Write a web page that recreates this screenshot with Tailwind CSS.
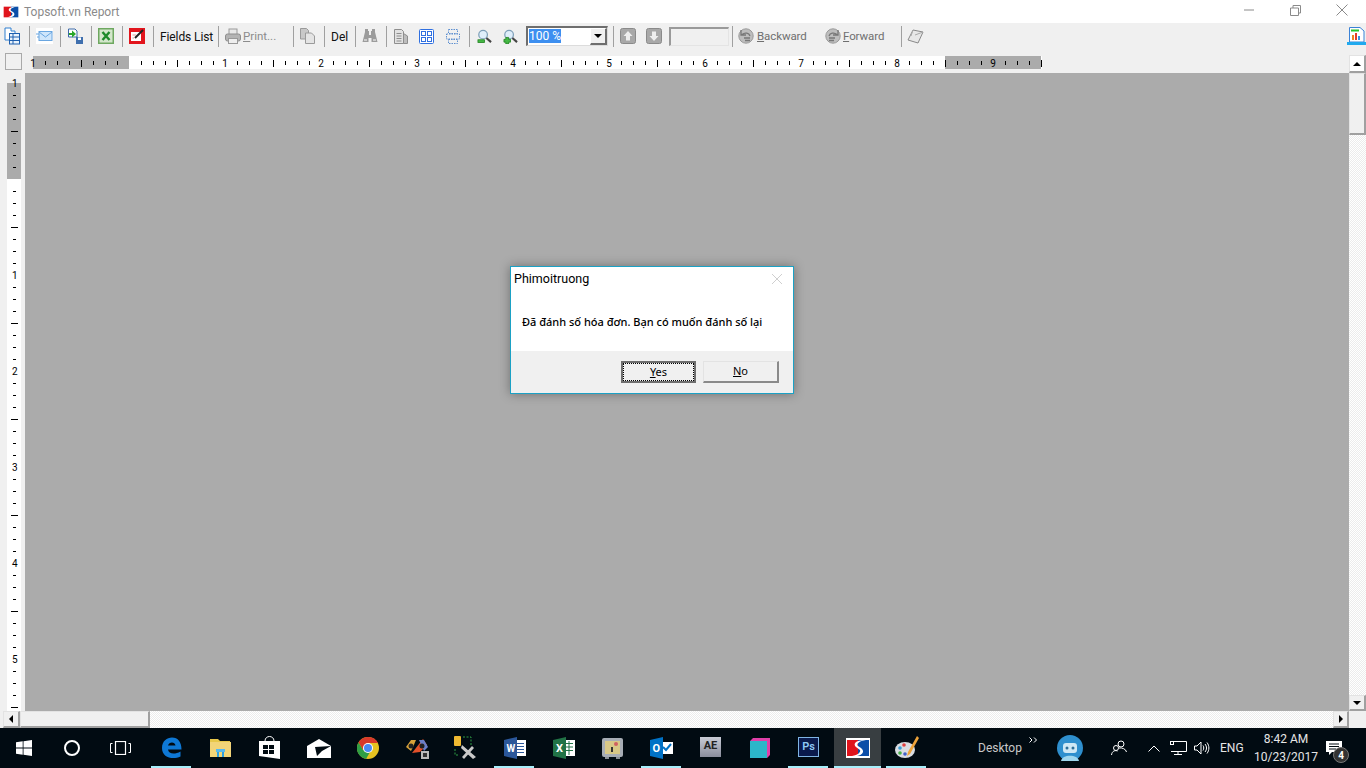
<!DOCTYPE html>
<html lang="en">
  <head>
    <meta charset="UTF-8" />
    <title>Topsoft.vn Report</title>
    <script src="https://cdn.jsdelivr.net/npm/@tailwindcss/browser@4"></script>
  </head>
  <body class="bg-[#f0f0f0] font-['Roboto','Liberation_Sans',sans-serif]">
    <svg width="0" height="0" class="absolute">
      <symbol id="logo" viewBox="0 0 24 20">
        <rect width="24" height="20" fill="#fff" />
        <rect x="1" y="2" width="11" height="16" fill="#e0141c" />
        <rect x="12" y="2" width="11" height="16" fill="#0b4ea8" />
        <path d="M17 2 C9 3 7 6 10 9 L14 12 C15 14 12 17 6 18 L11 18 C17 17 19 13 15 10 L12 8 C10 6 13 3 20 2 Z" fill="#fff" />
      </symbol>
      <symbol id="glass" viewBox="0 0 16 16">
        <circle cx="6.5" cy="6" r="4.6" fill="#dfeefa" stroke="#7d9fb8" stroke-width="1.3" />
        <path d="M10 9.5 L15 14" stroke="#444" stroke-width="2.2" />
      </symbol>
    </svg>

    <div class="relative flex h-[768px] w-[1366px] flex-col overflow-hidden">
      <!-- title bar -->
      <div class="flex h-[23px] items-center bg-white pl-[3px] text-[12px] text-[#8a8a8a]">
        <svg class="h-[14px] w-[16px]"><use href="#logo" /></svg>
        <span class="ml-[5px] mt-px w-[94px] whitespace-nowrap">Topsoft.vn Report</span>
        <svg class="ml-auto mr-[35px] mb-[3px] h-[2px] w-[11px]" viewBox="0 0 11 2"><path d="M0 1H10" stroke="#8a8a8a" /></svg>
        <svg class="mr-[35px] mb-[3px] h-[11px] w-[11px]" viewBox="0 0 11 11" fill="none" stroke="#8a8a8a"><path d="M.5 3H8.500V10.500H.5ZM3 3V.5H10.500V8H8.500" /></svg>
        <svg class="mr-[18px] mb-[3px] h-[12px] w-[12px]" viewBox="0 0 12 12" stroke="#8a8a8a"><path d="M.5 .5L11.500 11.500M11.500 .5L.5 11.500" /></svg>
      </div>

      <!-- toolbar -->
      <div class="flex h-[29px] items-center bg-[#f0f0f0] pb-[3px] pl-[4px] text-[12px] text-[#111]">
        <svg class="h-[18px] w-[16px]" viewBox="0 0 16 18"><path d="M1 1H7V4H11V8H7V13H1Z" fill="#fff" stroke="#2f7fd0" /><rect x="5.500" y="6.500" width="10" height="10.500" fill="#e9f3fc" stroke="#1e5fae" /><path d="M5.500 10H15.500M5.500 13.500H15.500M9 6.500V17" stroke="#1e5fae" /></svg>
        <div class="ml-[9px] h-[21px] w-px bg-[#a0a0a0]"></div>
        <svg class="ml-[6px] h-[16px] w-[17px]" viewBox="0 0 17 16"><rect width="17" height="16" fill="#fff" /><rect x="3" y="3.500" width="13" height="9" fill="#cfe6fb" stroke="#6aa6e0" /><path d="M3 4L9.500 9L16 4M0 6H3M1 9H3" fill="none" stroke="#6aa6e0" /></svg>
        <div class="ml-[7px] h-[21px] w-px bg-[#a0a0a0]"></div>
        <svg class="ml-[6px] h-[16px] w-[16px]" viewBox="0 0 16 16"><path d="M1.500 1H8L10 3V9H1.500Z" fill="#fff" stroke="#3d6aa8" /><path d="M2 5H5V2.500L9 6L5 9.500V7H2Z" fill="#29a829" /><rect x="9" y="9" width="7" height="7" fill="#3f6fae" /><rect x="11" y="9.500" width="3" height="2.500" fill="#fff" /></svg>
        <div class="ml-[8px] h-[21px] w-px bg-[#a0a0a0]"></div>
        <svg class="ml-[6px] h-[16px] w-[16px]" viewBox="0 0 16 16"><rect width="16" height="16" fill="#6ea860" /><rect x="1.500" y="1.500" width="13" height="13" fill="#d3e6cb" /><path d="M4.500 4L11.500 12M11.500 4L4.500 12" stroke="#1d8a2a" stroke-width="2.400" /></svg>
        <div class="ml-[8px] h-[21px] w-px bg-[#a0a0a0]"></div>
        <svg class="ml-[6px] h-[16px] w-[16px]" viewBox="0 0 16 16"><rect width="16" height="16" fill="#e2151d" /><rect x="2" y="4" width="10" height="9" fill="#fff" /><path d="M6 10L14 2" stroke="#222" stroke-width="2" /><path d="M3.500 7H7M3.500 10H5" stroke="#e79a9a" /></svg>
        <div class="ml-[8px] h-[21px] w-px bg-[#a0a0a0]"></div>
        <span class="ml-[6px] mt-[2px] w-[52px] whitespace-nowrap tracking-[-0.1px]">Fields List</span>
        <div class="ml-[6px] h-[21px] w-px bg-[#a0a0a0]"></div>
        <svg class="ml-[6px] h-[16px] w-[16px]" viewBox="0 0 16 16"><rect x="4" y="1" width="8" height="6" fill="#e8e8e8" stroke="#9a9a9a" /><rect x=".5" y="6" width="15" height="7" rx="2" fill="#b4b4b4" stroke="#8e8e8e" /><rect x="3.500" y="10.500" width="9" height="5" fill="#eee" stroke="#999" /></svg>
        <span class="ml-[2px] mt-[2px] w-[32px] whitespace-nowrap text-[11.500px] text-[#8c8c8c]"><span class="underline">P</span>rint...</span>
        <div class="ml-[18px] h-[21px] w-px bg-[#a0a0a0]"></div>
        <svg class="ml-[6px] h-[16px] w-[15px]" viewBox="0 0 15 16"><path d="M.5 .5H6.500L8.500 2.500V11H.5Z" fill="#c8c8c8" stroke="#9a9a9a" /><path d="M5.500 5H11.500L14.500 8V15.500H5.500Z" fill="#e4e4e4" stroke="#9a9a9a" /></svg>
        <div class="ml-[9px] h-[21px] w-px bg-[#a0a0a0]"></div>
        <span class="ml-[6px] mt-[2px] w-[16px] whitespace-nowrap">Del</span>
        <div class="ml-[8px] h-[21px] w-px bg-[#a0a0a0]"></div>
        <svg class="ml-[6px] h-[16px] w-[16px]" viewBox="0 0 16 16" fill="#9c9c9c"><path d="M3 1H6V3H7V7H9V3H10V1H13V4L15.500 14H9.500V10H6.500V14H.5L3 4Z" /><rect x="2" y="11" width="3" height="2" fill="#ccc" /><rect x="11" y="11" width="3" height="2" fill="#ccc" /></svg>
        <div class="ml-[8px] h-[21px] w-px bg-[#a0a0a0]"></div>
        <svg class="ml-[7px] h-[15px] w-[14px]" viewBox="0 0 14 15"><path d="M.5 .5H7.500L9.500 2.500V14.500H.5Z" fill="#e2e2e2" stroke="#8e8e8e" /><path d="M2.500 4.500H7.500M2.500 7H7.500M2.500 9.500H7.500M2.500 12H7.500" stroke="#8e8e8e" /><path d="M9.500 4.500L13.500 7V14.500H9.500Z" fill="#bdbdbd" stroke="#8e8e8e" /></svg>
        <svg class="ml-[11px] h-[15px] w-[15px]" viewBox="0 0 15 15" fill="#fff" stroke="#2f6fe0"><rect x=".5" y=".5" width="14" height="14" rx="1" /><rect x="2.500" y="2.500" width="4" height="4" /><rect x="8.500" y="2.500" width="4" height="4" /><rect x="2.500" y="8.500" width="4" height="4" /><rect x="8.500" y="8.500" width="4" height="4" /></svg>
        <svg class="ml-[12px] h-[15px] w-[14px]" viewBox="0 0 14 15" fill="none" stroke="#5d8fd0" stroke-dasharray="1.500 1"><rect x="2.500" y=".5" width="9" height="4" /><rect x=".5" y="5" width="13" height="5" /><rect x="2.500" y="10.500" width="9" height="4" /></svg>
        <div class="ml-[9px] h-[21px] w-px bg-[#a0a0a0]"></div>
        <svg class="ml-[7px] h-[15px] w-[15px]" viewBox="0 0 16 16"><use href="#glass" /><rect x="1" y="11.500" width="7" height="3" fill="#45b845" stroke="#1c7d1c" stroke-width=".8" /></svg>
        <svg class="ml-[11px] h-[15px] w-[15px]" viewBox="0 0 16 16"><use href="#glass" /><path d="M3 9H6V11H8V14H6V16H3V14H1V11H3Z" fill="#45b845" stroke="#1c7d1c" stroke-width=".8" /></svg>
        <div class="ml-[8px] flex h-[20px] w-[82px] border border-t-2 border-l-2 border-t-[#6e6e6e] border-l-[#6e6e6e] border-r-[#dcdcdc] border-b-[#dcdcdc] bg-white">
          <span class="ml-[1px] mt-[1px] h-[14px] self-start bg-[#3d8ff0] text-[12px] leading-[14px] text-white">100 %</span>
          <div class="ml-auto flex w-[17px] items-center justify-center border border-r-2 border-b-2 border-t-white border-l-white border-r-[#6e6e6e] border-b-[#6e6e6e] bg-[#f0f0f0]">
            <div class="h-0 w-0 border-x-[4px] border-t-[4px] border-x-transparent border-t-black"></div>
          </div>
        </div>
        <div class="ml-[5px] h-[21px] w-px bg-[#a0a0a0]"></div>
        <svg class="ml-[6px] h-[16px] w-[16px]" viewBox="0 0 16 16"><rect x=".5" y=".5" width="15" height="15" rx="2" fill="#a8a8a8" stroke="#8a8a8a" /><path d="M8 3L12.500 8H10V12.500H6V8H3.500Z" fill="#eee" /></svg>
        <svg class="ml-[10px] h-[16px] w-[16px]" viewBox="0 0 16 16"><rect x=".5" y=".5" width="15" height="15" rx="2" fill="#a8a8a8" stroke="#8a8a8a" /><path d="M8 13L12.500 8H10V3.500H6V8H3.500Z" fill="#eee" /></svg>
        <div class="ml-[7px] h-[19px] w-[60px] border border-t-2 border-l-2 border-t-[#9a9a9a] border-l-[#9a9a9a] border-r-[#e4e4e4] border-b-[#e4e4e4] bg-[#f0f0f0]"></div>
        <div class="ml-[3px] h-[21px] w-px bg-[#a0a0a0]"></div>
        <svg class="ml-[5px] h-[16px] w-[16px]" viewBox="0 0 16 16"><circle cx="8" cy="8" r="7.200" fill="#bdbdbd" stroke="#9a9a9a" /><path d="M3 2V7H8M4 6.500C7 4 11 5 12 8M6 10H12M7 12.500H12" fill="none" stroke="#777" stroke-width="1.300" /></svg>
        <span class="ml-[3px] mt-[2px] w-[49px] whitespace-nowrap text-[11.500px] tracking-[-0.1px] text-[#6f6f6f]"><span class="underline">B</span>ackward</span>
        <svg class="ml-[19px] h-[16px] w-[16px]" viewBox="0 0 16 16"><circle cx="8" cy="8" r="7.200" fill="#bdbdbd" stroke="#9a9a9a" /><path d="M13 2V7H8M12 6.500C9 4 5 5 4 8M4 10H10M4 12.500H9" fill="none" stroke="#777" stroke-width="1.300" /></svg>
        <span class="ml-[2px] mt-[2px] w-[41px] whitespace-nowrap text-[11.500px] tracking-[-0.1px] text-[#6f6f6f]"><span class="underline">F</span>orward</span>
        <div class="ml-[17px] h-[21px] w-px bg-[#a0a0a0]"></div>
        <svg class="ml-[5px] h-[15px] w-[17px]" viewBox="0 0 17 15"><path d="M6 1L16 3L11 14L1 11Z" fill="#e8e8e8" stroke="#8a8a8a" /><path d="M6 1L4 7M16 3L8 6" stroke="#aaa" fill="none" /></svg>
        <svg class="ml-auto h-[19px] w-[19px]" viewBox="0 0 19 19"><path d="M2.500 .5H13L17 4V15H2.500Z" fill="#fff" stroke="#3b82d6" /><rect x="4" y="2.500" width="8" height="2" fill="#22c32a" /><rect x="5" y="8" width="2" height="5" fill="#f08020" /><rect x="8" y="6" width="2" height="7" fill="#e23b2a" /><rect x="11" y="9" width="2" height="4" fill="#3a8fe0" /><rect y="15" width="19" height="3" fill="#21a9ee" /></svg>
      </div>

      <!-- report area -->
      <div class="flex h-[659px]">
        <div class="flex w-[1349px] flex-col">
          <div class="flex h-[21px] bg-[#f0f0f0]">
            <div class="ml-[5px] mt-px h-[17px] w-[17px] border border-[#a9a9a9] bg-[#f0f0f0]"></div>
            <div id="h-ruler" class="relative ml-[11px] mt-[4px] h-[13px] w-[1009px] bg-white">
              <div class="absolute inset-y-0 left-0 w-[96px] bg-[#ababab]"></div>
              <div class="absolute inset-y-0 left-[912px] w-[96px] bg-[#ababab]"></div>
            </div>
          </div>
          <div class="flex flex-1">
            <div class="w-[25px] pl-[7px] pt-[10px]">
              <div id="v-ruler" class="relative h-[628px] w-[14px] bg-white">
                <div class="absolute inset-x-0 top-0 h-[96px] bg-[#ababab]"></div>
              </div>
            </div>
            <div class="flex-1 bg-[#ababab]"></div>
          </div>
        </div>
        <!-- vertical scrollbar -->
        <div class="flex w-[17px] flex-col pt-[3px]">
          <div class="flex h-[18px] items-center justify-center border border-r-2 border-b-2 border-t-[#e3e3e3] border-l-[#e3e3e3] border-r-[#a0a0a0] border-b-[#a0a0a0] bg-white">
            <div class="h-0 w-0 border-x-[4px] border-b-[4px] border-x-transparent border-b-black"></div>
          </div>
          <div class="h-[62px] border border-r-2 border-b-2 border-t-[#e3e3e3] border-l-[#e3e3e3] border-r-[#a0a0a0] border-b-[#a0a0a0] bg-[#f0f0f0]"></div>
          <div class="flex-1 bg-[repeating-conic-gradient(#ececec_0_25%,#fff_0_50%)] bg-[length:2px_2px]"></div>
          <div class="flex h-[16px] items-center justify-center border border-r-2 border-b-2 border-t-[#e3e3e3] border-l-[#e3e3e3] border-r-[#a0a0a0] border-b-[#a0a0a0] bg-[#f0f0f0]">
            <div class="h-0 w-0 border-x-[4px] border-t-[4px] border-x-transparent border-t-black"></div>
          </div>
        </div>
      </div>

      <!-- horizontal scrollbar -->
      <div class="flex h-[17px] bg-[#f0f0f0] pl-[3px]">
        <div class="flex w-[17px] items-center justify-center border border-r-2 border-b-2 border-t-[#e3e3e3] border-l-[#e3e3e3] border-r-[#a0a0a0] border-b-[#a0a0a0] bg-[#f0f0f0]">
          <div class="h-0 w-0 border-y-[4px] border-r-[4px] border-y-transparent border-r-black"></div>
        </div>
        <div class="w-[130px] border border-r-2 border-b-2 border-t-[#e3e3e3] border-l-[#e3e3e3] border-r-[#a0a0a0] border-b-[#a0a0a0] bg-[#f0f0f0]"></div>
        <div class="w-[1183px] bg-[repeating-conic-gradient(#ececec_0_25%,#fff_0_50%)] bg-[length:2px_2px]"></div>
        <div class="flex w-[16px] items-center justify-center border border-r-2 border-b-2 border-t-[#e3e3e3] border-l-[#e3e3e3] border-r-[#a0a0a0] border-b-[#a0a0a0] bg-[#f0f0f0]">
          <div class="h-0 w-0 border-y-[4px] border-l-[4px] border-y-transparent border-l-black"></div>
        </div>
      </div>

      <!-- taskbar -->
      <div class="flex h-[40px] items-stretch bg-[#010b12] text-white">
        <div class="flex w-[48px] items-center justify-center">
          <svg class="h-[16px] w-[16px]" viewBox="0 0 16 16" fill="#fff"><path d="M0 2.300L6.700 1.300V7.600H0ZM7.500 1.200L16 0V7.600H7.500ZM0 8.400H6.700V14.700L0 13.700ZM7.500 8.400H16V16L7.500 14.800Z" /></svg>
        </div>
        <div class="flex w-[48px] items-center justify-center">
          <div class="h-[16px] w-[16px] rounded-full border-2 border-white"></div>
        </div>
        <div class="flex w-[48px] items-center justify-center">
          <svg class="h-[14px] w-[21px]" viewBox="0 0 21 14" fill="none" stroke="#fff"><rect x="5.500" y=".5" width="10" height="13" stroke-width="1.200" /><path d="M2.500 2.500H.5V11.500H2.500M18.500 2.500H20.500V11.500H18.500" /></svg>
        </div>
        <div class="relative ml-[3px] flex w-[49px] items-center justify-center">
          <svg class="h-[22px] w-[21px]" viewBox="0 0 21 22"><path d="M1 11C1 4 6 .5 11 .5C17 .5 20.500 5 20.500 12.500H7C7.500 17 13.500 18 19.500 14.500V19.500C12 23 1 21 1 11ZM7 8.500H14.500C14 4.500 8 4.500 7 8.500Z" fill="#0e78d5" /></svg>
          <div class="absolute bottom-0 left-[4px] h-[2px] w-[40px] bg-[#a6eefa]"></div>
        </div>
        <div class="flex w-[49px] items-center justify-center">
          <svg class="h-[19px] w-[21px]" viewBox="0 0 21 19"><path d="M0 0H8L10 2H20V4H0Z" fill="#e8c84a" /><rect y="3" width="21" height="15" fill="#f2d478" /><path d="M7 18V11H14V18H12V13H9V18Z" fill="#2d9fe0" /><rect x="6" y="10" width="9" height="3" fill="#58b8ec" /></svg>
        </div>
        <div class="flex w-[49px] items-center justify-center">
          <svg class="h-[24px] w-[21px]" viewBox="0 0 21 24"><path d="M0 5H21V23L0 20Z" fill="#fff" /><path d="M6 5C6 -1 15 -1 15 5" fill="none" stroke="#fff" /><path d="M4 9H9V13H4ZM10 9H15V13H10ZM4 14H9V18H4ZM10 14H15V18H10Z" fill="#010b12" /></svg>
        </div>
        <div class="flex w-[49px] items-center justify-center">
          <svg class="h-[19px] w-[24px]" viewBox="0 0 24 19"><path d="M0 7L12 0L24 7V19H0Z" fill="#fff" /><path d="M8 8L24 7L15 12L10 17Z" fill="#010b12" /></svg>
        </div>
        <div class="flex w-[49px] items-center justify-center">
          <svg class="h-[22px] w-[22px]" viewBox="0 0 22 22"><circle cx="11" cy="11" r="11" fill="#e5c220" /><path d="M11 0A11 11 0 0 0 1.500 5.500L6 13L11 6H21A11 11 0 0 0 11 0Z" fill="#d8392b" /><path d="M1.500 5.500A11 11 0 0 0 9 22L13 15L6 13Z" fill="#2f9e44" /><circle cx="11" cy="11" r="5" fill="#fff" /><circle cx="11" cy="11" r="4" fill="#4a8af4" /></svg>
        </div>
        <div class="flex w-[49px] items-center justify-center">
          <svg class="h-[22px] w-[24px]" viewBox="0 0 24 22"><path d="M1 10L6 3H11L8 10L6 14Z" fill="#d8a33a" /><path d="M7 16L18 2L22 8L15 15Z" fill="#e2512a" /><path d="M14 3H19L23 10L19 14Z" fill="#6a7fc8" /><circle cx="6" cy="9" r="2.500" fill="#222" /><circle cx="17" cy="9" r="2.500" fill="#222" /><rect x="16" y="14" width="8" height="8" fill="#bbb" /><rect x="18" y="16" width="4" height="4" fill="#333" /></svg>
        </div>
        <div class="flex w-[49px] items-center justify-center">
          <svg class="h-[24px] w-[24px]" viewBox="0 0 24 24"><rect x="0" y="0" width="7" height="10" rx="1" fill="#efb931" /><path d="M9 1H17V10M1 13V19H4" fill="none" stroke="#2f9e44" stroke-dasharray="2 1.500" /><path d="M8 21L18 10L20 12L10 23ZM8 9L22 21L19 23L7 12Z" fill="#c9c9c9" /></svg>
        </div>
        <div class="relative flex w-[49px] items-center justify-center">
          <svg class="h-[22px] w-[22px]" viewBox="0 0 22 22"><rect x="8" y="3" width="14" height="16" fill="#fff" /><path d="M12 6.500H20M12 9.500H20M12 12.500H20M12 15.500H20" stroke="#2b579a" /><path d="M0 3L13 0V22L0 19Z" fill="#2b579a" /><text x="2.500" y="15" font-size="10" font-weight="700" fill="#fff">W</text></svg>
          <div class="absolute bottom-0 left-[4px] h-[2px] w-[40px] bg-[#a6eefa]"></div>
        </div>
        <div class="flex w-[49px] items-center justify-center">
          <svg class="h-[22px] w-[22px]" viewBox="0 0 22 22"><rect x="8" y="3" width="14" height="16" fill="#fff" /><path d="M12 6.500H20M12 10H20M12 13.500H20M16 4V18" stroke="#217346" /><path d="M0 3L13 0V22L0 19Z" fill="#217346" /><text x="3" y="15" font-size="11" font-weight="700" fill="#fff">X</text></svg>
        </div>
        <div class="flex w-[49px] items-center justify-center">
          <svg class="h-[22px] w-[22px]" viewBox="0 0 22 22"><rect x="0" y="1" width="21" height="19" rx="2" fill="#a7adb5" /><rect x="3" y="4" width="15" height="13" fill="#d8c887" /><rect x="9" y="10" width="2" height="5" fill="#333" /><circle cx="14" cy="7" r="2" fill="#d06060" /><rect x="3" y="20" width="4" height="2" fill="#8a8f96" /><rect x="14" y="20" width="4" height="2" fill="#8a8f96" /></svg>
        </div>
        <div class="relative flex w-[49px] items-center justify-center">
          <svg class="h-[22px] w-[23px]" viewBox="0 0 23 22"><rect x="10" y="5" width="13" height="12" fill="#fff" /><path d="M13 10L16 13L21 7" fill="none" stroke="#0072c6" stroke-width="2" /><path d="M0 3L13 0V22L0 19Z" fill="#0072c6" /><text x="2.500" y="15" font-size="11" font-weight="700" fill="#fff">O</text></svg>
          <div class="absolute bottom-0 left-[4px] h-[2px] w-[40px] bg-[#a6eefa]"></div>
        </div>
        <div class="flex w-[49px] items-center justify-center pb-[3px]">
          <div class="flex h-[20px] w-[21px] items-center justify-center bg-linear-to-b from-[#c9ccd6] to-[#8a8d9c] text-[11px] font-bold text-[#222]">AE</div>
        </div>
        <div class="flex w-[49px] items-center justify-center">
          <svg class="h-[20px] w-[20px]" viewBox="0 0 20 20"><path d="M3 0H20V17L17 20V3H0Z" fill="#e03fa8" /><path d="M3 0L0 3H17V20H0V3Z" fill="#2cb6c9" /></svg>
        </div>
        <div class="relative flex w-[49px] items-center justify-center pb-[2px]">
          <div class="flex h-[20px] w-[21px] items-center justify-center border border-[#7fb4e4] bg-[#0a1a4c] text-[11px] font-semibold text-[#8fc8f5]">Ps</div>
          <div class="absolute bottom-0 left-[4px] h-[2px] w-[40px] bg-[#a6eefa]"></div>
        </div>
        <div class="relative ml-[1px] flex w-[47px] items-center justify-center bg-[#383e41]">
          <svg class="h-[20px] w-[24px]"><use href="#logo" /></svg>
          <div class="absolute inset-x-0 bottom-0 h-[2px] bg-[#a6eefa]"></div>
        </div>
        <div class="relative ml-[1px] flex w-[49px] items-center justify-center">
          <svg class="h-[24px] w-[24px]" viewBox="0 0 24 24"><ellipse cx="10" cy="14" rx="10" ry="8" fill="#d9dde2" /><circle cx="5" cy="12" r="1.800" fill="#3a9fd8" /><circle cx="9" cy="9" r="1.800" fill="#e04040" /><circle cx="5" cy="17" r="1.800" fill="#45b045" /><circle cx="10" cy="18" r="1.800" fill="#4060c8" /><path d="M22 0L24 2L15 18L12 20L13 16Z" fill="#eda33a" /></svg>
          <div class="absolute bottom-0 left-[4px] h-[2px] w-[40px] bg-[#a6eefa]"></div>
        </div>

        <!-- tray -->
        <span class="ml-[47px] mt-[12px] w-[43px] whitespace-nowrap text-[12px] leading-[16px] text-[#c8c8c8]">Desktop</span>
        <svg class="ml-[8px] mt-[9px] h-[6px] w-[9px]" viewBox="0 0 9 6" fill="none" stroke="#fff"><path d="M.5 .5L3 3L.5 5.500M5 .5L7.500 3L5 5.500" /></svg>
        <svg class="ml-[19px] mt-[7px] h-[26px] w-[26px]" viewBox="0 0 26 26"><circle cx="13" cy="13" r="13" fill="#2e8fce" /><rect x="6" y="8" width="14" height="10" rx="3" fill="#cfe8f5" /><circle cx="10" cy="13" r="1.500" fill="#2e6f98" /><circle cx="16" cy="13" r="1.500" fill="#2e6f98" /><path d="M4 26C5 19 21 19 22 26Z" fill="#9fd6ee" /></svg>
        <svg class="ml-[28px] mt-[12px] h-[16px] w-[16px]" viewBox="0 0 16 16" fill="none" stroke="#fff"><circle cx="10" cy="4" r="3" /><circle cx="5" cy="8" r="2.500" /><path d="M.5 15C1 11 4 10 6.500 11M8 8C11 7.500 15 9 15.500 12" /></svg>
        <svg class="ml-[21px] mt-[17px] h-[7px] w-[12px]" viewBox="0 0 12 7" fill="none" stroke="#fff"><path d="M.5 6.500L6 1L11.500 6.500" /></svg>
        <svg class="ml-[10px] mt-[13px] h-[14px] w-[17px]" viewBox="0 0 17 14" fill="none" stroke="#fff"><path d="M3.500 .5H16.500V10.500H1M8 10.500V13.500M4 13.500H12" /><rect x=".5" y=".5" width="3" height="3" /></svg>
        <svg class="ml-[7px] mt-[13px] h-[14px] w-[16px]" viewBox="0 0 16 14" fill="none" stroke="#fff"><path d="M.5 5H3L7 1V13L3 9H.5Z" /><path d="M9 4.500C10 6 10 8 9 9.500M11 3C13 5.500 13 8.500 11 11M13 1.500C15.500 5 15.500 9 13 12.500" /></svg>
        <span class="ml-[10px] mt-[12px] w-[24px] whitespace-nowrap text-[12px] leading-[16px] text-[#e6e6e6]">ENG</span>
        <div class="ml-[13px] flex w-[58px] flex-col items-center whitespace-nowrap pt-[2px] text-[12px] leading-[18px] text-[#e6e6e6]">
          <span>8:42 AM</span>
          <span>10/23/2017</span>
        </div>
        <div class="relative ml-[11px] w-[24px]">
          <svg class="absolute left-0 top-[13px] h-[14px] w-[16px]" viewBox="0 0 16 14" fill="#fff"><path d="M0 0H16V11H6L3 14V11H0Z" /><path d="M3 3H13M3 5.500H13M3 8H10" stroke="#010b12" /></svg>
          <div class="absolute left-[7px] top-[19px] flex h-[16px] w-[16px] items-center justify-center rounded-full border border-[#777] bg-[#333] text-[10px] font-bold text-white">4</div>
        </div>
      </div>

      <!-- dialog -->
      <div class="absolute left-[510px] top-[266px] flex h-[128px] w-[284px] flex-col border border-[#1ba1c5] bg-white text-black shadow-[0_0_10px_rgba(0,0,0,0.35)]">
        <div class="flex h-[24px] items-center pl-[3px] text-[12.500px]">
          <span>Phimoitruong</span>
          <svg class="ml-auto mr-[11px] h-[10px] w-[10px]" viewBox="0 0 10 10" stroke="#cfcfcf"><path d="M0 0L10 10M10 0L0 10" /></svg>
        </div>
        <div class="flex-1 pl-[11px] pt-[23px] font-['Noto_Sans','Liberation_Sans',sans-serif] text-[11px] leading-[16px] font-medium">Đã đánh số hóa đơn. Bạn có muốn đánh số lại</div>
        <div class="flex h-[42px] bg-[#f0f0f0] pl-[110px] pt-[10px] font-['Noto_Sans','Liberation_Sans',sans-serif] text-[11px]">
          <div class="flex h-[22px] w-[75px] items-center justify-center border-2 border-[#6e6e6e] bg-[#f0f0f0] outline-1 -outline-offset-3 outline-dotted outline-black"><span><span class="underline">Y</span>es</span></div>
          <div class="ml-[7px] flex h-[22px] w-[76px] items-center justify-center border border-r-2 border-b-2 border-t-[#e3e3e3] border-l-[#e3e3e3] border-r-[#8a8a8a] border-b-[#8a8a8a] bg-[#f0f0f0]"><span><span class="underline">N</span>o</span></div>
        </div>
      </div>
    </div>

    <script>
      // ruler ticks every 1/8 inch (12px), numbers every inch
      const hRuler = document.getElementById("h-ruler");
      for (let k = 0; k <= 84; k++) {
        const x = k * 12;
        const el = document.createElement("div");
        if (k % 8 === 0) {
          if (k === 8) continue;
          el.className = "absolute top-0 text-[10px] leading-[15px] text-black -translate-x-1/2";
          el.textContent = k === 0 ? 1 : k / 8 - 1;
        } else {
          el.className = k % 4 === 0 ? "absolute top-[4px] h-[7px] w-px bg-black" : "absolute top-[5px] h-[4px] w-px bg-black";
        }
        el.style.left = x + "px";
        hRuler.appendChild(el);
      }

      const vRuler = document.getElementById("v-ruler");
      for (let k = 0; k <= 52; k++) {
        const y = k * 12;
        const el = document.createElement("div");
        if (k % 8 === 0) {
          if (k === 8) continue;
          el.className = "absolute left-[5px] mt-px text-[10px] leading-[12px] text-black -translate-y-1/2";
          el.textContent = k === 0 ? 1 : k / 8 - 1;
        } else {
          el.className = k % 4 === 0 ? "absolute left-[4px] h-px w-[7px] bg-black" : "absolute left-[6px] h-px w-[3px] bg-black";
        }
        el.style.top = y + "px";
        vRuler.appendChild(el);
      }
    </script>
  </body>
</html>
